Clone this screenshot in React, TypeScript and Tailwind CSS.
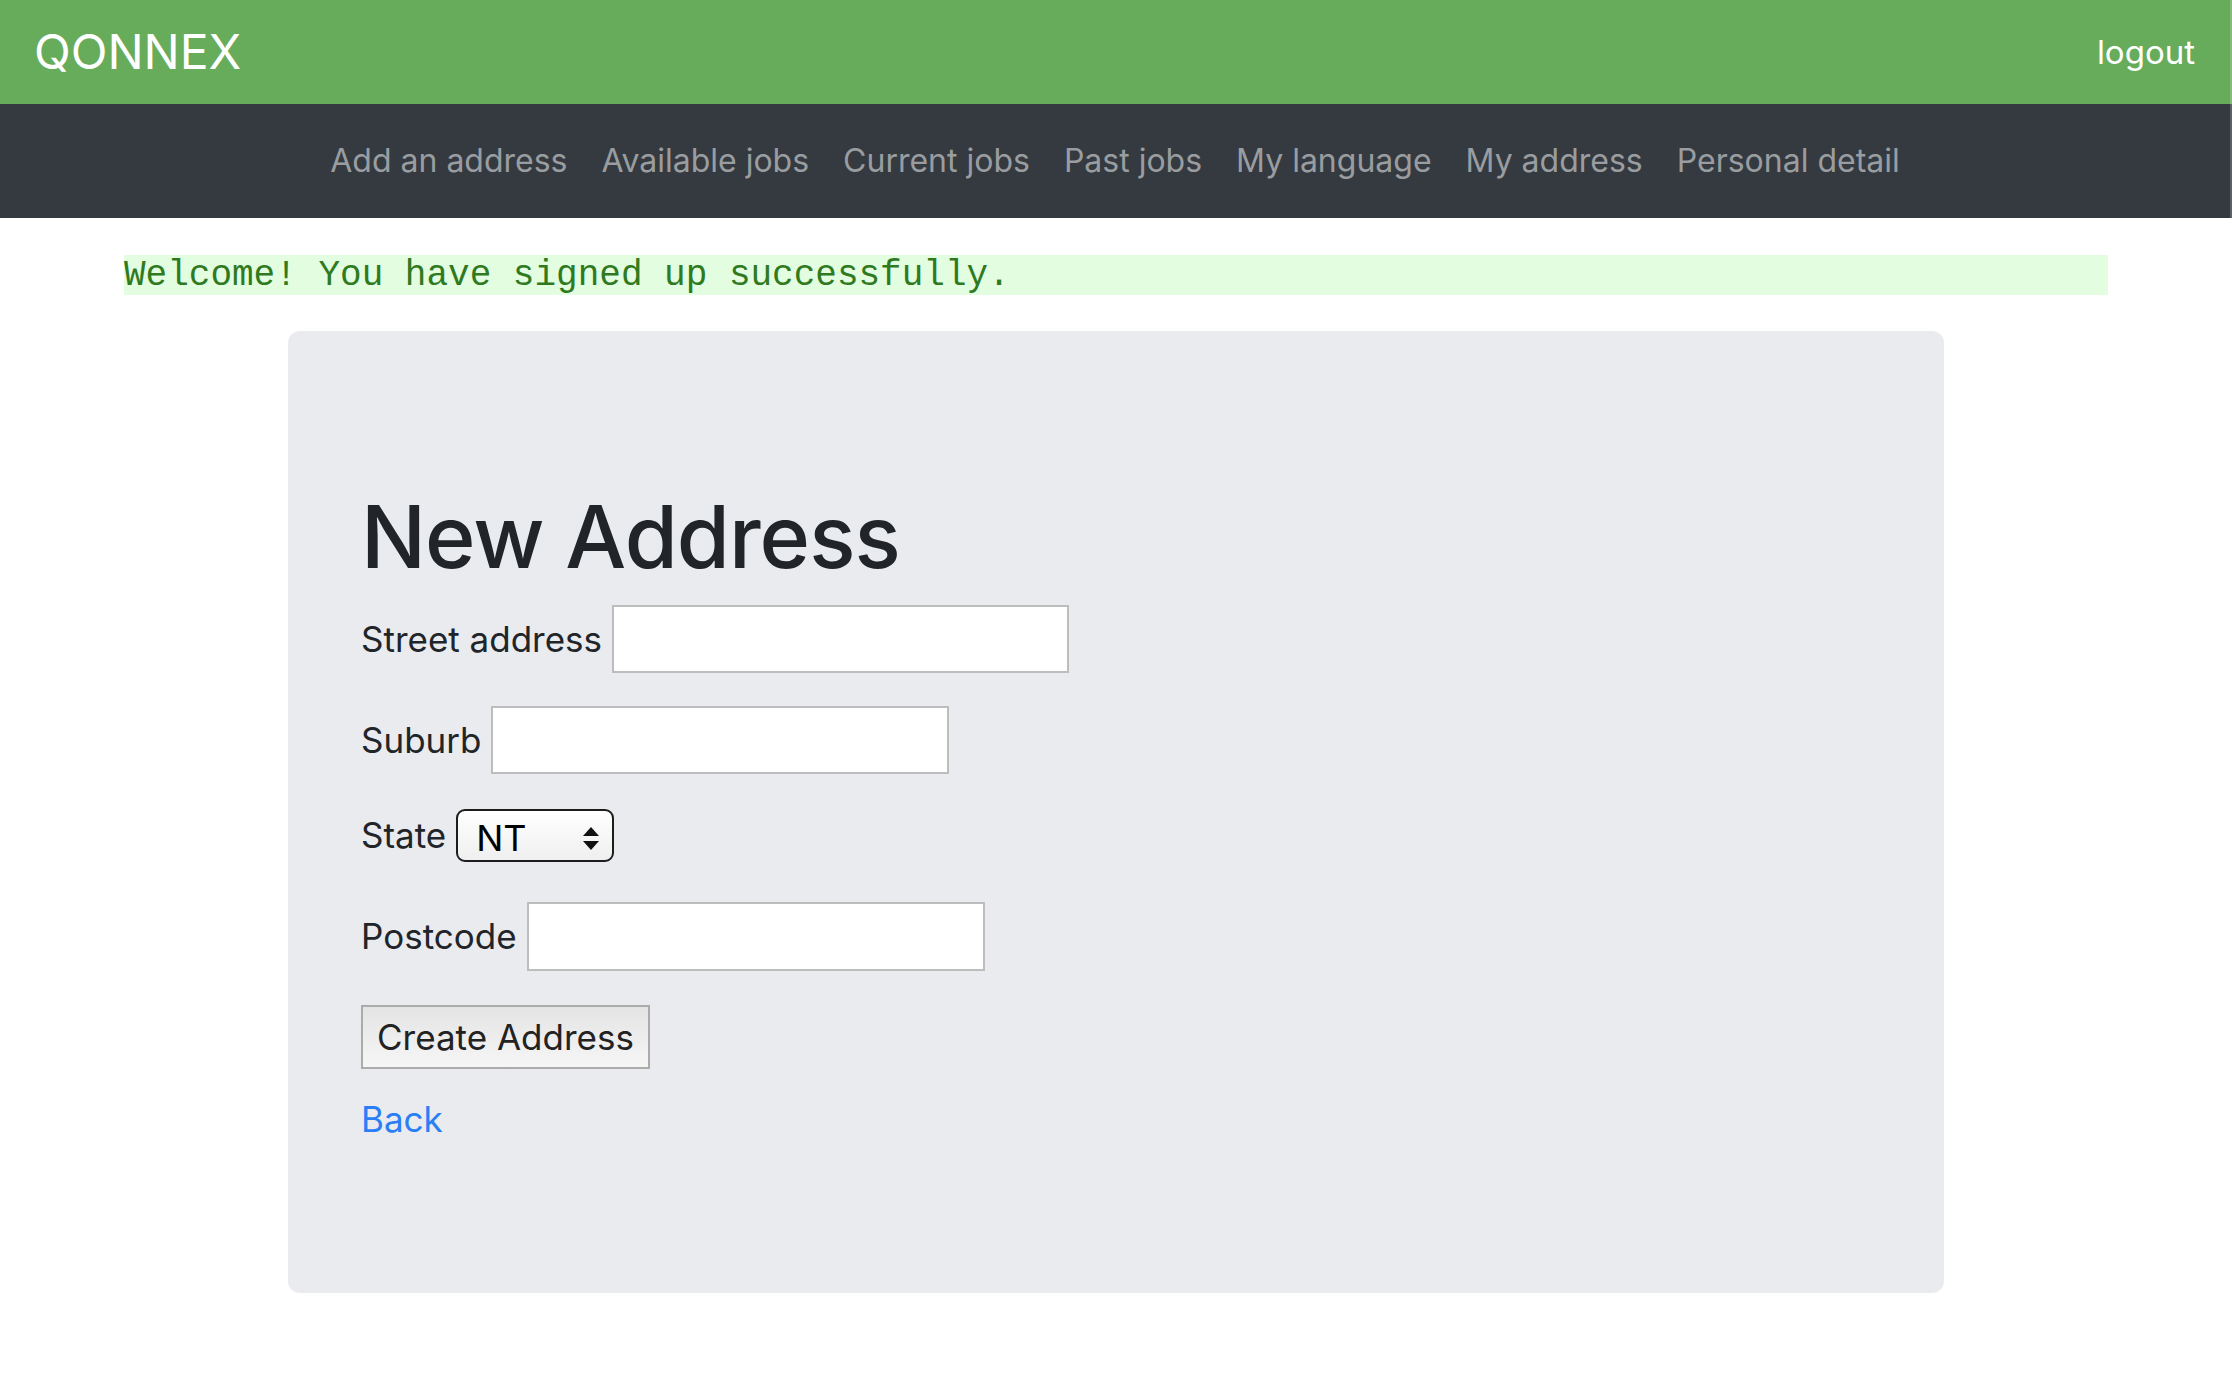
import { useState } from 'react';

const links = [
  'Add an address',
  'Available jobs',
  'Current jobs',
  'Past jobs',
  'My language',
  'My address',
  'Personal detail',
];

function Field({ label, children }: { label: string; children: React.ReactNode }) {
  return (
    <div className="flex items-center gap-[10px]">
      <label className="text-[35px] text-[#212529]">{label}</label>
      {children}
    </div>
  );
}

export default function App() {
  const [state, setState] = useState('NT');

  return (
    <div className="min-h-screen bg-white font-['Inter',sans-serif]">
      <header className="h-[104px] bg-[#66ac5b] flex items-center justify-between pl-[34px] pr-[35px] border-r-2 border-white/20">
        <span className="text-[48px] text-white leading-none">QONNEX</span>
        <a href="#" className="text-[33px] text-white leading-none">logout</a>
      </header>

      <nav className="h-[114px] bg-[#343a40] flex items-center justify-center border-r-2 border-white/20">
        {links.map(link => (
          <a key={link} href="#" className="px-[17px] text-[32px] text-[#9a9da0]">
            {link}
          </a>
        ))}
      </nav>

      <main className="px-[124px]">
        <div className="mt-[37px] h-[40px] bg-[#e3fde0] text-[36px] leading-[42px] text-[#2f7a1f] font-['Liberation_Mono',monospace]">
          Welcome! You have signed up successfully.
        </div>

        <div className="mt-[36px] mx-auto w-[1656px] h-[962px] rounded-[12px] bg-[#e9ebef] pl-[73px] pt-[152px]">
          <h1 className="text-[86px] leading-[108px] font-medium text-[#212529] tracking-[-1px]">New Address</h1>

          <div className="flex flex-col items-start mt-[14px]">
            <Field label="Street address">
              <input className="w-[457px] h-[68px] bg-white border-2 border-[#bdbdbd] outline-none" />
            </Field>

            <div className="mt-[33px]">
              <Field label="Suburb">
                <input className="w-[458px] h-[68px] bg-white border-2 border-[#bdbdbd] outline-none" />
              </Field>
            </div>

            <div className="mt-[35px]">
              <Field label="State">
                <div className="relative w-[158px] h-[53px] rounded-[9px] border-2 border-[#1c1c1c] bg-gradient-to-b from-white to-[#efefef]">
                  <select
                    value={state}
                    onChange={e => setState(e.target.value)}
                    className="appearance-none w-full h-full bg-transparent pl-[18px] text-[36px] text-black outline-none"
                  >
                    <option>ACT</option>
                    <option>NSW</option>
                    <option>NT</option>
                    <option>QLD</option>
                    <option>SA</option>
                    <option>TAS</option>
                    <option>VIC</option>
                    <option>WA</option>
                  </select>
                  <svg className="absolute right-[13px] top-[16px] pointer-events-none" width="16" height="23" viewBox="0 0 16 23">
                    <path d="M8 0 L16 9 L0 9 Z" fill="#111" />
                    <path d="M0 14 L16 14 L8 23 Z" fill="#111" />
                  </svg>
                </div>
              </Field>
            </div>

            <div className="mt-[40px]">
              <Field label="Postcode">
                <input className="w-[458px] h-[69px] bg-white border-2 border-[#bdbdbd] outline-none" />
              </Field>
            </div>

            <button className="mt-[34px] w-[289px] h-[64px] border-2 border-[#ababab] bg-gradient-to-b from-[#e4e4e4] to-[#f6f6f6] text-[35px] text-[#222]">
              Create Address
            </button>

            <a href="#" className="mt-[30px] text-[35px] leading-[40px] text-[#2a7ef6]">
              Back
            </a>
          </div>
        </div>
      </main>
    </div>
  );
}
